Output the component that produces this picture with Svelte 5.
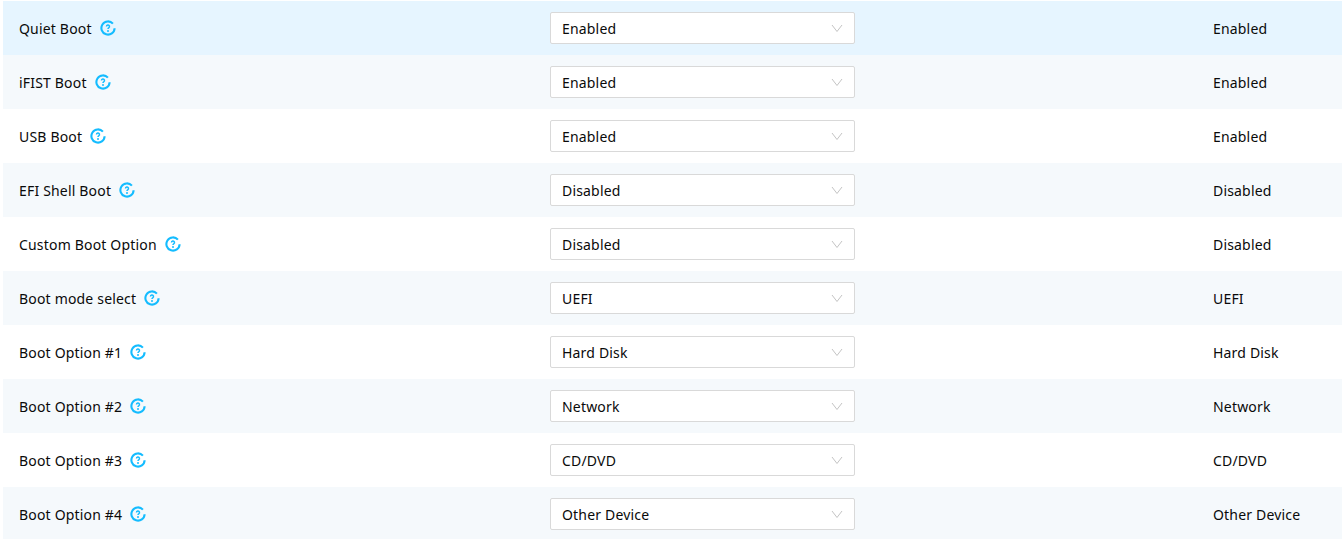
<script>
  const rows = [
    { label: 'Quiet Boot', value: 'Enabled' },
    { label: 'iFIST Boot', value: 'Enabled' },
    { label: 'USB Boot', value: 'Enabled' },
    { label: 'EFI Shell Boot', value: 'Disabled' },
    { label: 'Custom Boot Option', value: 'Disabled' },
    { label: 'Boot mode select', value: 'UEFI' },
    { label: 'Boot Option #1', value: 'Hard Disk' },
    { label: 'Boot Option #2', value: 'Network' },
    { label: 'Boot Option #3', value: 'CD/DVD' },
    { label: 'Boot Option #4', value: 'Other Device' }
  ]
</script>

<div class="table">
  {#each rows as row, i}
    <div class="row" class:hover={i === 0} class:striped={i % 2 === 1}>
      <div class="label">
        <span>{row.label}</span>
        <svg class="help" width="16" height="16" viewBox="0 0 16 16" fill="none">
          <path d="M12.9 3.6A6.6 6.6 0 1 0 14.6 8.2" stroke="#14bcff" stroke-width="2.1" />
          <path d="M6.5 6.6a1.5 1.5 0 1 1 2.2 1.3c-.5.3-.7.5-.7 1" stroke="#14bcff" stroke-width="1.5" />
          <circle cx="8" cy="11" r="1" fill="#14bcff" />
        </svg>
      </div>
      <div class="cell">
        <div class="select">
          <span>{row.value}</span>
          <svg class="arrow" width="12" height="9" viewBox="0 0 12 9" fill="none">
            <path d="M1 1 6 7.5 11 1" stroke="#c4c4c4" stroke-width="1" />
          </svg>
        </div>
      </div>
      <div class="current">{row.value}</div>
    </div>
  {/each}
</div>

<style>
  :global(body) {
    margin: 0;
    background: #fff;
    overflow: hidden;
  }

  .table {
    padding: 1px 0 0 3px;
    font-family: 'Noto Sans', sans-serif;
    font-size: 14px;
    letter-spacing: 0.18px;
    color: #0a0a0a;
  }

  .row {
    display: grid;
    grid-template-columns: 547px 663px 1fr;
    align-items: center;
    height: 54px;
  }

  .striped {
    background: #f5f9fc;
  }

  .hover {
    background: #e6f5ff;
  }

  .label {
    display: flex;
    align-items: center;
    gap: 8px;
    padding-left: 16px;
  }

  .help {
    display: block;
  }

  .select {
    display: flex;
    align-items: center;
    justify-content: space-between;
    box-sizing: border-box;
    width: 305px;
    height: 32px;
    padding: 0 11px;
    background: #fff;
    border: 1px solid #d9d9d9;
    border-radius: 2px;
  }

  .arrow {
    display: block;
  }
</style>
